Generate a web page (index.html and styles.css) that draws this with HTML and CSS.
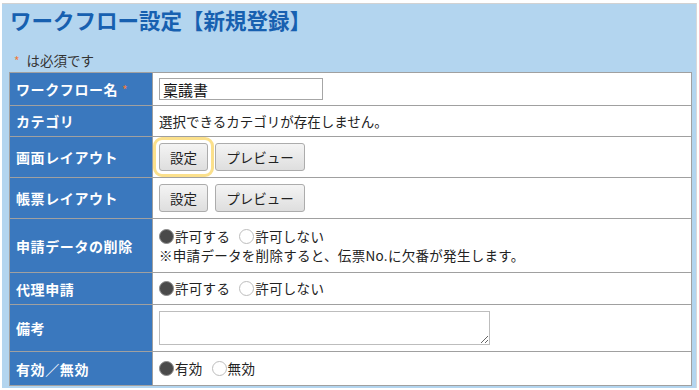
FILE: index.html
```html
<!DOCTYPE html>
<html lang="ja">
<head>
  <meta charset="UTF-8" />
  <title>ワークフロー設定【新規登録】</title>
  <link rel="stylesheet" href="styles.css">
</head>
<body>
  <div class="panel">
    <h1 class="title">ワークフロー設定【新規登録】</h1>
    <p class="req-note"><span class="req">*</span>は必須です</p>
    <table class="form">
      <tr class="r-name">
        <th>ワークフロー名 <span class="req">*</span></th>
        <td><input type="text" class="text-input" value="稟議書"></td>
      </tr>
      <tr class="r-cat">
        <th>カテゴリ</th>
        <td>選択できるカテゴリが存在しません。</td>
      </tr>
      <tr class="r-btn">
        <th>画面レイアウト</th>
        <td>
          <button class="btn focused">設定</button>
          <button class="btn wide">プレビュー</button>
        </td>
      </tr>
      <tr class="r-btn">
        <th>帳票レイアウト</th>
        <td>
          <button class="btn">設定</button>
          <button class="btn wide">プレビュー</button>
        </td>
      </tr>
      <tr class="r-del">
        <th>申請データの削除</th>
        <td>
          <div class="radios">
            <label><span class="radio on"></span>許可する</label>
            <label><span class="radio"></span>許可しない</label>
          </div>
          <div class="hint">※申請データを削除すると、伝票No.に欠番が発生します。</div>
        </td>
      </tr>
      <tr class="r-proxy">
        <th>代理申請</th>
        <td>
          <div class="radios">
            <label><span class="radio on"></span>許可する</label>
            <label><span class="radio"></span>許可しない</label>
          </div>
        </td>
      </tr>
      <tr class="r-memo">
        <th>備考</th>
        <td><textarea class="memo"></textarea></td>
      </tr>
      <tr class="r-valid">
        <th>有効／無効</th>
        <td>
          <div class="radios">
            <label><span class="radio on"></span>有効</label>
            <label><span class="radio"></span>無効</label>
          </div>
        </td>
      </tr>
    </table>
  </div>
</body>
</html>
```

FILE: styles.css
```css
body {
  margin: 0;
  font-family: "Noto Sans CJK JP", sans-serif;
  background: #fff;
  color: #222;
}
.panel {
  margin: 3px 2px 0 2px;
  padding: 1px 4px 2px 7px;
  background: #b3d5ef;
  border-top: 1px solid #d2d2d2;
  border-right: 1px solid #d8d8d8;
}
.title {
  margin: 0 0 0 1px;
  font-size: 21.5px;
  line-height: 30px;
  font-weight: bold;
  color: #1760b0;
}
.req-note {
  margin: 16px 0 2px 5px;
  font-size: 13.5px;
  line-height: 18px;
  color: #333;
}
.req-note .req {
  margin-right: 7px;
}
.req {
  color: #ef7c3c;
  font-weight: normal;
  font-size: 12px;
}
.form {
  width: 683px;
  border-collapse: collapse;
  border: 1px solid #999;
  background: #fff;
}
.form th {
  width: 130px;
  padding: 0 6px;
  background: #3a78be;
  color: #fff;
  font-size: 14px;
  font-weight: bold;
  letter-spacing: 0.6px;
  text-align: left;
  border: 1px solid #a0a0a0;
}
.form td {
  padding: 0 6px;
  font-size: 13.5px;
  border: 1px solid #a0a0a0;
  color: #222;
}
.r-name th, .r-name td { height: 32px; }
.r-cat th, .r-cat td { height: 30px; }
.r-btn th, .r-btn td { height: 40px; }
.r-del th, .r-del td { height: 53px; }
.r-proxy th, .r-proxy td { height: 31px; }
.r-memo th, .r-memo td { height: 46px; }
.r-valid th, .r-valid td { height: 33px; }
.text-input {
  display: block;
  width: 164px;
  height: 22px;
  box-sizing: border-box;
  margin: 0;
  padding: 0 3px;
  border: 1px solid #a6a6a6;
  font-family: "Noto Sans CJK JP", sans-serif;
  font-size: 15px;
  color: #111;
}
.btn {
  height: 28px;
  margin: 0 4px 0 0;
  padding: 0;
  width: 49px;
  border: 1px solid #acacac;
  border-radius: 3px;
  background: linear-gradient(#f4f4f4, #dedede);
  font-family: "Noto Sans CJK JP", sans-serif;
  font-size: 13.5px;
  color: #222;
  vertical-align: middle;
}
.btn.wide {
  width: 90px;
}
.btn.focused {
  outline: 3px solid #fbe08c;
  outline-offset: 3px;
}
.radios {
  display: flex;
  gap: 9px;
  height: 19px;
  line-height: 19px;
}
.radios label {
  display: flex;
  align-items: center;
  letter-spacing: 0.3px;
}
.radio {
  flex: none;
  width: 13px;
  height: 13px;
  border: 1px solid #bdbdbd;
  border-radius: 50%;
  background: #fff;
  margin-right: 1px;
}
.radio.on {
  background: #4a4a4a;
  border-color: #8a8a8a;
}
.hint {
  height: 19px;
  line-height: 19px;
  letter-spacing: 0.3px;
}
.memo {
  display: block;
  width: 331px;
  height: 34px;
  box-sizing: border-box;
  margin: 0;
  border: 1px solid #bdbdbd;
  resize: both;
}
```
